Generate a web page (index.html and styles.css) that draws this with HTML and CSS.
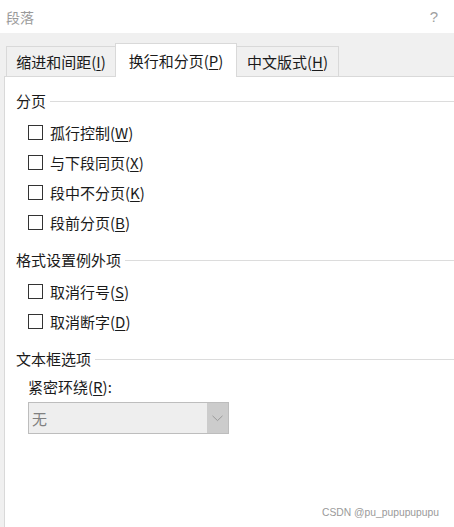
FILE: index.html
```html
<!DOCTYPE html>
<html lang="zh-CN">
<head>
<meta charset="utf-8">
<title>段落</title>
<link rel="stylesheet" href="styles.css">
</head>
<body>
<div class="dialog">
  <div class="titlebar">
    <span class="title">段落</span>
    <span class="help">?</span>
  </div>
  <div class="tabstrip">
    <div class="tab tab-first">缩进和间距(<u>I</u>)</div>
    <div class="tab tab-active">换行和分页(<u>P</u>)</div>
    <div class="tab tab-third">中文版式(<u>H</u>)</div>
  </div>
  <div class="frame">
    <div class="panel">
      <section class="group">
        <div class="group-head"><span>分页</span><i class="rule"></i></div>
        <ul class="checks">
          <li><span class="box"></span>孤行控制(<u>W</u>)</li>
          <li><span class="box"></span>与下段同页(<u>X</u>)</li>
          <li><span class="box"></span>段中不分页(<u>K</u>)</li>
          <li><span class="box"></span>段前分页(<u>B</u>)</li>
        </ul>
      </section>
      <section class="group">
        <div class="group-head"><span>格式设置例外项</span><i class="rule"></i></div>
        <ul class="checks">
          <li><span class="box"></span>取消行号(<u>S</u>)</li>
          <li><span class="box"></span>取消断字(<u>D</u>)</li>
        </ul>
      </section>
      <section class="group">
        <div class="group-head"><span>文本框选项</span><i class="rule"></i></div>
        <div class="field-label">紧密环绕(<u>R</u>):</div>
        <div class="select">
          <span class="select-value">无</span>
          <span class="select-btn">
            <svg width="11" height="7" viewBox="0 0 11 7"><path d="M0.5 0.8 L5.5 5.6 L10.5 0.8" fill="none" stroke="#9a9a9a" stroke-width="1"/></svg>
          </span>
        </div>
      </section>
    </div>
  </div>
  <div class="watermark">CSDN @pu_pupupupupu</div>
</div>
</body>
</html>
```

FILE: styles.css
```css
html, body {
  margin: 0;
  padding: 0;
  background: #ffffff;
}
body {
  font-family: "Noto Sans CJK SC", "Noto Sans", sans-serif;
  color: #1a1a1a;
}
.dialog {
  position: relative;
  width: 454px;
  height: 527px;
  display: flex;
  flex-direction: column;
  overflow: hidden;
}
.titlebar {
  height: 33px;
  display: flex;
  align-items: center;
  justify-content: space-between;
  padding: 0 16px 0 6px;
  font-size: 14px;
  color: #9a9a9a;
  background: #ffffff;
}
.help { font-family: "Liberation Sans", sans-serif; font-size: 15px; color: #a0a0a0; }
.tabstrip {
  height: 43px;
  background: #f0f0f0;
  display: flex;
  align-items: flex-end;
  padding-left: 6px;
  position: relative;
  z-index: 1;
}
.tab {
  box-sizing: border-box;
  height: 30px;
  border: 1px solid #d9d9d9;
  border-bottom: none;
  display: flex;
  align-items: center;
  justify-content: center;
  font-size: 15px;
  color: #1a1a1a;
  background: #f0f0f0;
}
.tab u { text-decoration: underline; text-underline-offset: 2px; }
.tab-first { width: 109px; border-right: none; }
.tab-active {
  width: 122px;
  height: 34px;
  background: #ffffff;
  margin-bottom: -1px;
  padding-bottom: 1px;
}
.tab-third { width: 102px; border-left: none; }
.frame {
  flex: 1;
  background: #f0f0f0;
  padding-left: 4px;
  display: flex;
}
.panel {
  flex: 1;
  background: #ffffff;
  border-left: 1px solid #d9d9d9;
  border-top: 1px solid #d9d9d9;
  padding: 11px 0 0 11px;
  display: flex;
  flex-direction: column;
  gap: 10px;
}
.group-head {
  height: 24px;
  display: flex;
  align-items: center;
  font-size: 15px;
  color: #1a1a1a;
}
.rule {
  flex: 1;
  height: 0;
  border-top: 1px solid #dcdcdc;
  margin-left: 4px;
  margin-top: 2px;
}
.checks {
  list-style: none;
  margin: 0;
  padding: 5px 0 0 12px;
}
.checks li {
  height: 30px;
  display: flex;
  align-items: center;
  font-size: 15px;
  color: #1a1a1a;
}
.checks u, .field-label u { text-decoration: underline; text-underline-offset: 2px; }
.box {
  box-sizing: border-box;
  width: 15px;
  height: 15px;
  border: 1px solid #333333;
  background: #ffffff;
  margin-right: 7px;
  flex: none;
}
.field-label {
  margin-top: 4px;
  padding-left: 12px;
  height: 24px;
  display: flex;
  align-items: center;
  font-size: 15px;
  color: #1a1a1a;
}
.select {
  box-sizing: border-box;
  margin: 4px 0 0 12px;
  width: 201px;
  height: 32px;
  border: 1px solid #bdbdbd;
  background: #eeeeee;
  display: flex;
  align-items: stretch;
}
.select-value {
  flex: 1;
  display: flex;
  align-items: center;
  padding-left: 3px;
  font-size: 15px;
  color: #808080;
}
.select-btn {
  width: 21px;
  background: #cccccc;
  display: flex;
  align-items: center;
  justify-content: center;
}
.watermark {
  position: absolute;
  right: 15px;
  bottom: 9px;
  font-family: "Liberation Sans", "Noto Sans", sans-serif;
  font-size: 10.3px;
  color: #9a9a9a;
}
```
